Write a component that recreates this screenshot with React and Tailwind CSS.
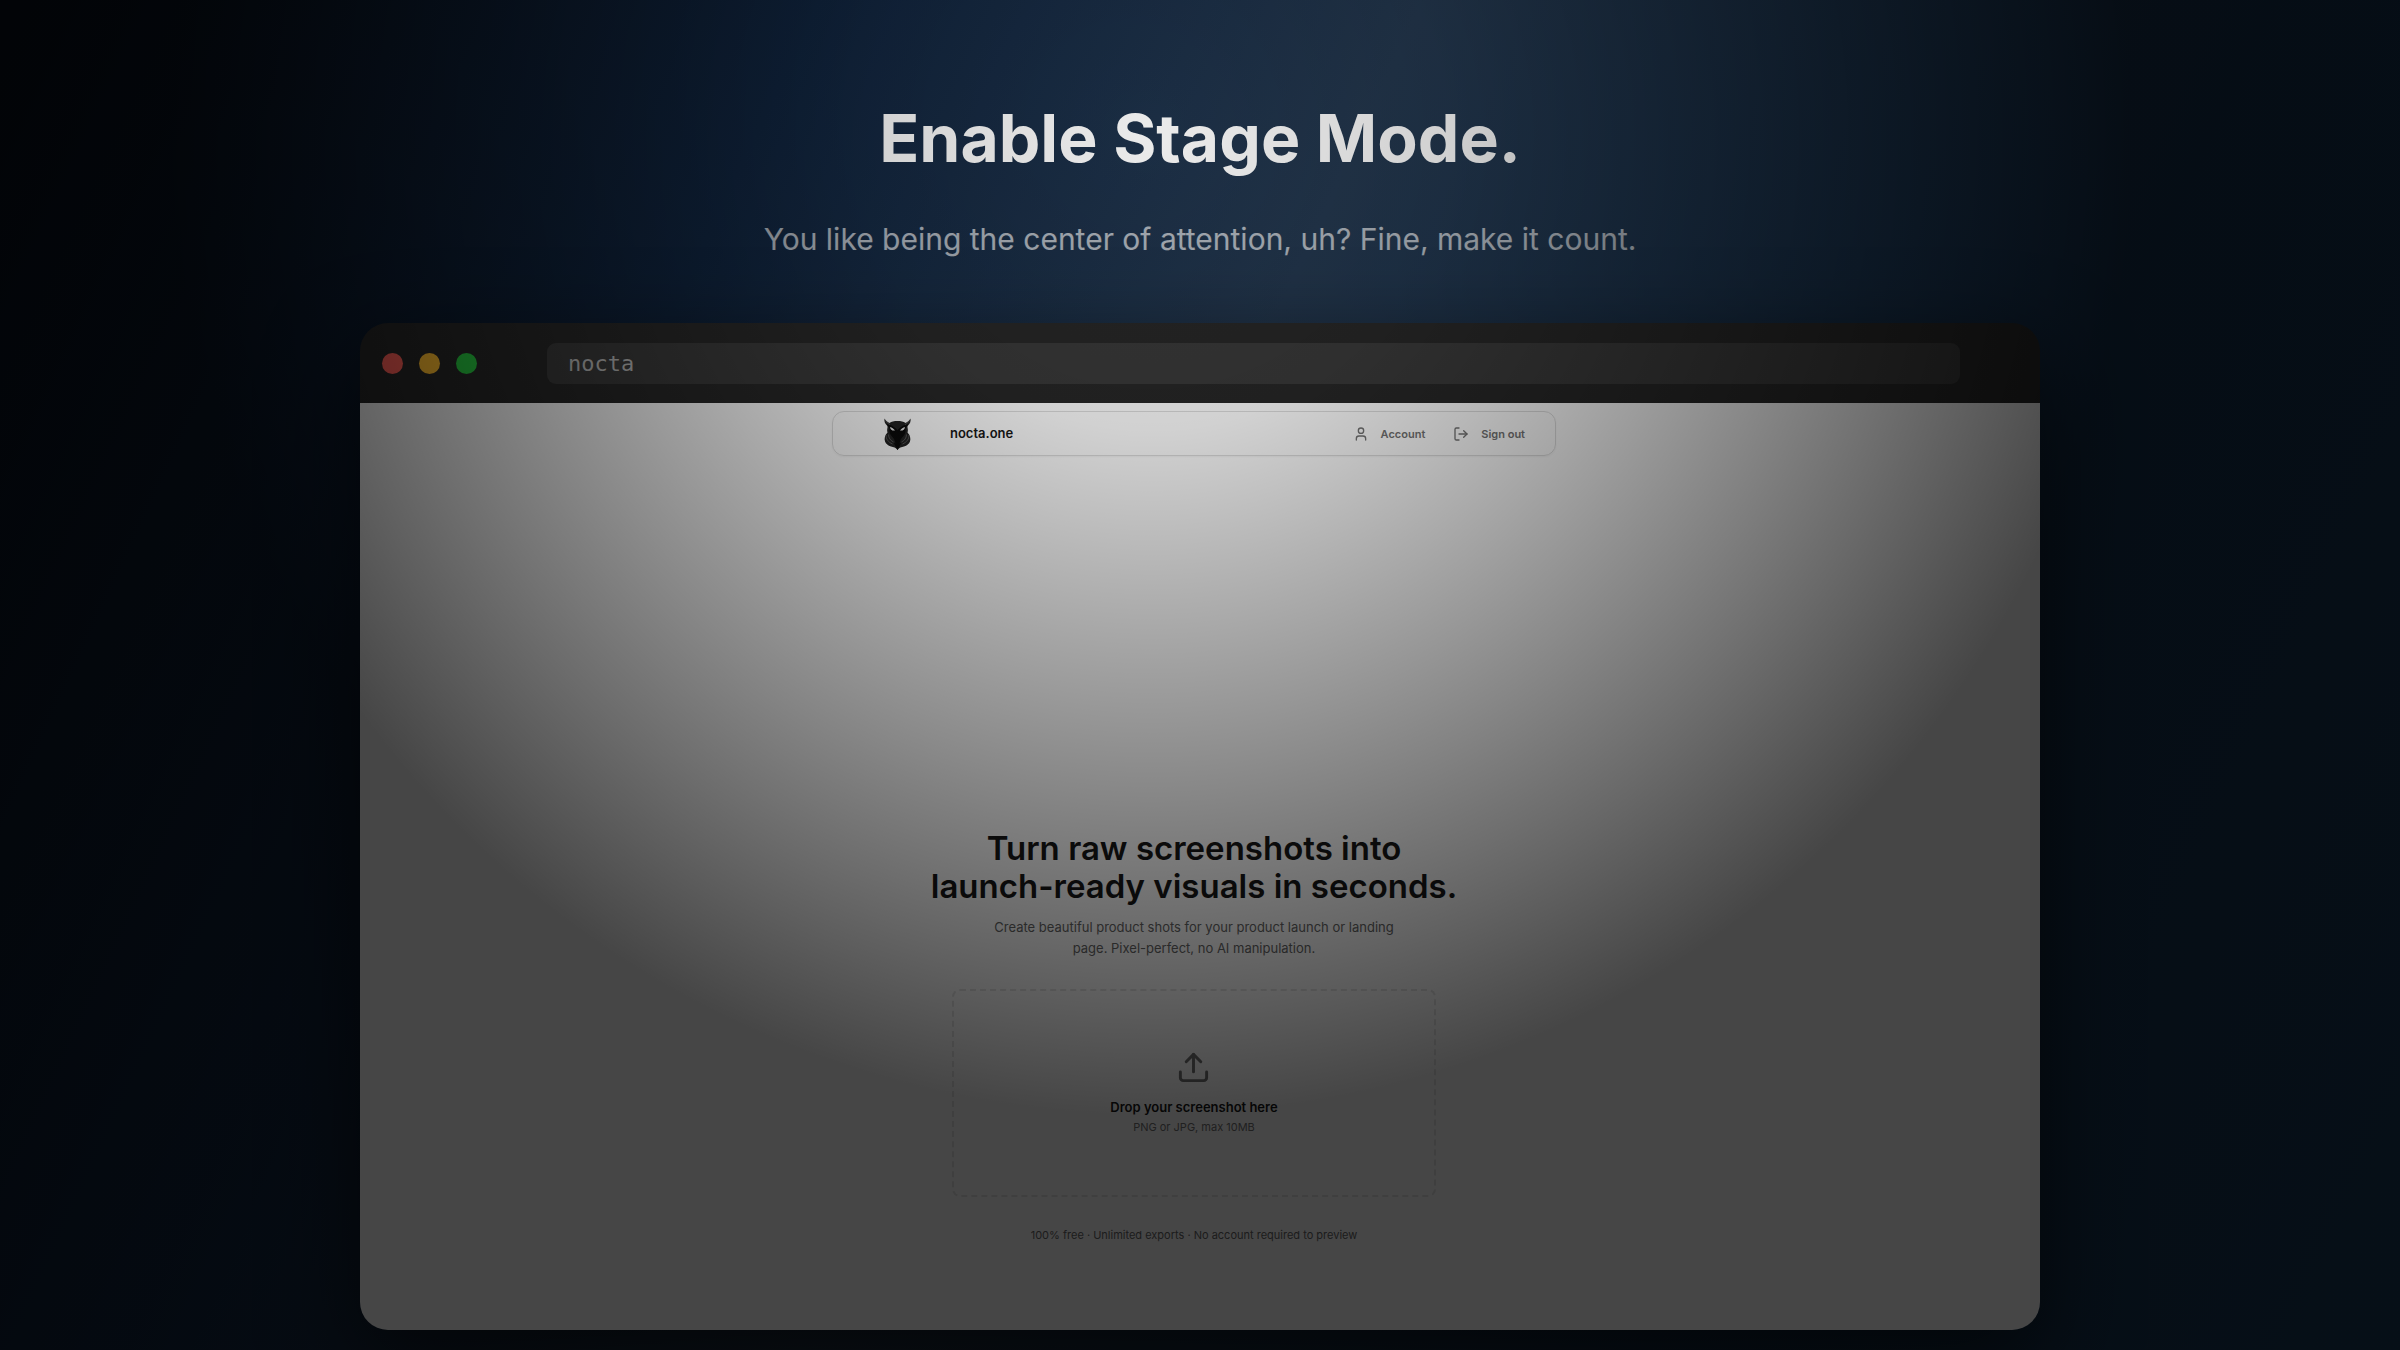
import { LogOut, Upload, User } from "lucide-react";

const OwlLogo = ({ className }) => (
  <svg viewBox="0 0 54 64" className={className} aria-hidden="true">
    <path
      fill="#222222"
      d="M1 1c2 4 5 6 10 9 4-3 9-4 16-4s12 1 16 4c5-3 8-5 10-9 1 6-1 10-5 14-1 1-1 2-1 4 1 4 1 7 0 10 5 5 7 12 5 18-2 5-6 8-12 10-5 1-10 2-13 7-3-5-8-6-13-7C8 55 4 52 2 47c-2-6 0-13 5-18-1-3-1-6 0-10 0-2 0-3-1-4C2 11 0 7 1 1z"
    />
    <path
      fill="#0a0a0a"
      d="M6 12c8 1 14 5 21 12 7-7 13-11 21-12-1 4-4 6-5 9 1 7-1 12-5 16-4 4-6 9-7 14l4-2-8 15-8-15 4 2c-1-5-3-10-7-14-4-4-6-9-5-16-1-3-4-5-5-9z"
    />
    <path
      fill="#e5e5e5"
      d="M12 18c4 1 7 3 10 7-5 1-9-1-10-7zM42 18c-4 1-7 3-10 7 5 1 9-1 10-7z"
    />
    <path
      fill="none"
      stroke="#666666"
      strokeWidth="1.5"
      d="M4 34c0 8 4 14 13 18M9 33c0 7 4 12 10 15M50 34c0 8-4 14-13 18M45 33c0 7-4 12-10 15M3 5c2 4 5 6 9 8M51 5c-2 4-5 6-9 8"
    />
  </svg>
);

const TitleBar = () => (
  <div className="flex h-20 shrink-0 items-center bg-[#272727] pr-20 pl-[22px]">
    <div className="flex w-[165px] shrink-0 gap-4">
      <button
        type="button"
        aria-label="Close"
        className="size-[21px] rounded-full bg-[#ff5f57]"
      />
      <button
        type="button"
        aria-label="Minimize"
        className="size-[21px] rounded-full bg-[#febc2e]"
      />
      <button
        type="button"
        aria-label="Zoom"
        className="size-[21px] rounded-full bg-[#28c840]"
      />
    </div>
    <input
      type="text"
      aria-label="Address"
      defaultValue="nocta"
      className="h-[41px] min-w-0 flex-1 rounded-[9px] bg-[#393939] px-[21px] font-['DejaVu_Sans_Mono',monospace] text-[22px] text-[#b4b4b4] outline-none"
    />
  </div>
);

const NavLink = ({ icon: Icon, label }) => (
  <a href="#" className="flex items-center gap-3">
    <Icon className="size-4" strokeWidth={2} />
    {label}
  </a>
);

const Nav = () => (
  <nav className="flex h-[45px] w-[724px] items-center rounded-xl border border-[#dedede] pt-px pr-[30px] pl-[51px] shadow-xs">
    <OwlLogo className="h-8 w-[27px]" />
    <a href="#" className="ml-[39px] text-[13px] font-semibold text-[#171717]">
      nocta.one
    </a>
    <div className="ml-auto flex gap-7 text-[11px] font-semibold text-[#737373]">
      <NavLink icon={User} label="Account" />
      <NavLink icon={LogOut} label="Sign out" />
    </div>
  </nav>
);

const DropZone = () => (
  <label className="mt-[30px] flex h-[208px] w-[484px] cursor-pointer flex-col items-center rounded-lg border-2 border-dashed border-[#e5e5e5] pt-[59px]">
    <input type="file" accept="image/png,image/jpeg" className="sr-only" />
    <Upload className="size-[35px] text-[#737373]" strokeWidth={2} />
    <span className="mt-3 text-[13px] leading-5 font-semibold text-[#171717]">
      Drop your screenshot here
    </span>
    <span className="text-[11px] leading-5 text-[#737373]">
      PNG or JPG, max 10MB
    </span>
  </label>
);

const BrowserWindow = () => (
  <section className="flex w-[70%] flex-1 flex-col overflow-hidden rounded-[28px] shadow-[0_32px_90px_rgba(0,0,0,0.6)]">
    <TitleBar />
    <div className="flex flex-1 flex-col items-center bg-white pt-2 pr-3 pb-[85px]">
      <Nav />
      <div className="mt-auto flex flex-col items-center text-center">
        <h2 className="text-[33px] leading-[38px] font-semibold text-[#171717]">
          Turn raw screenshots into
          <br />
          launch-ready visuals in seconds.
        </h2>
        <p className="mt-3 text-[13px] leading-[21px] text-[#666666]">
          Create beautiful product shots for your product launch or landing
          <br />
          page. Pixel-perfect, no AI manipulation.
        </p>
        <DropZone />
        <p className="mt-7 text-[11px] leading-5 text-[#666666]">
          100% free · Unlimited exports · No account required to preview
        </p>
      </div>
    </div>
  </section>
);

export default function App() {
  return (
    <main className="relative flex min-h-screen flex-col items-center overflow-hidden bg-[linear-gradient(115deg,#060d18_0%,#10243e_27%,#24384f_47%,#142f4c_75%,#163654_100%)] pb-5 font-['Inter',sans-serif]">
      <header className="pt-[98px] pb-16 text-center text-white">
        <h1 className="text-[66px] leading-[80px] font-bold">
          Enable Stage Mode.
        </h1>
        <p className="mt-[42px] text-[30px] leading-[39px] text-white/65">
          You like being the center of attention, uh? Fine, make it count.
        </p>
      </header>
      <BrowserWindow />
      {/* spotlight: everything outside the beam is dimmed */}
      <div className="pointer-events-none absolute inset-0 bg-[radial-gradient(circle_980px_at_48%_10%,rgba(0,0,0,0.08)_0%,rgba(0,0,0,0.18)_30%,rgba(0,0,0,0.725)_100%)]" />
    </main>
  );
}
